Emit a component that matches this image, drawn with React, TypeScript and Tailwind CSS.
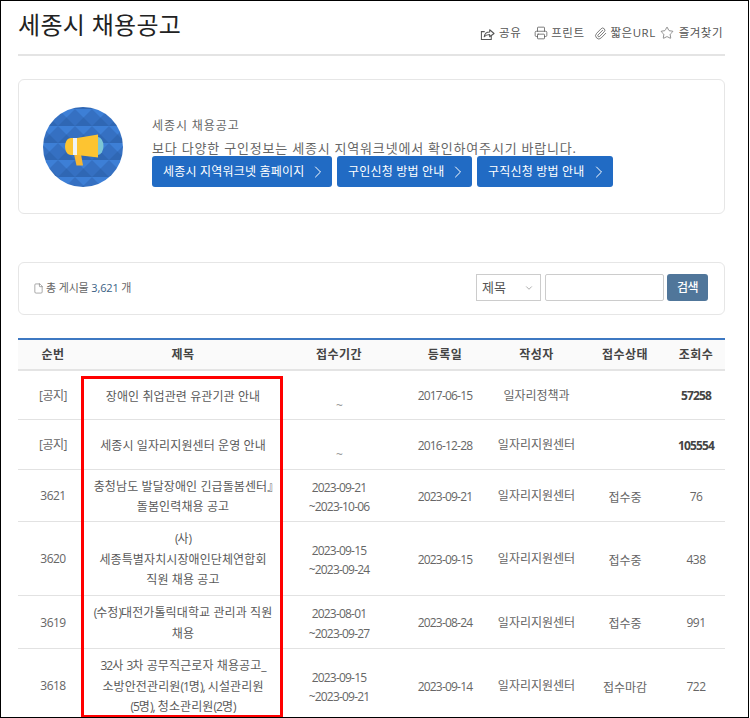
import { ChevronDown, ChevronRight, File, Paperclip, Printer, Star } from 'lucide-react'

const rows = [
  { no: '[공지]', title: ['장애인 취업관련 유관기관 안내'], period: ['~'], date: '2017-06-15', author: '일자리정책과', status: '', views: '57258', bold: true, h: 'h-[49px]' },
  { no: '[공지]', title: ['세종시 일자리지원센터 운영 안내'], period: ['~'], date: '2016-12-28', author: '일자리지원센터', status: '', views: '105554', bold: true, h: 'h-[50px]' },
  { no: '3621', title: ['충청남도 발달장애인 긴급돌봄센터』', '돌봄인력채용 공고'], period: ['2023-09-21', '~2023-10-06'], date: '2023-09-21', author: '일자리지원센터', status: '접수중', views: '76', bold: false, h: 'h-[52px]' },
  { no: '3620', title: ['(사)', '세종특별자치시장애인단체연합회', '직원 채용 공고'], period: ['2023-09-15', '~2023-09-24'], date: '2023-09-15', author: '일자리지원센터', status: '접수중', views: '438', bold: false, h: 'h-[74px]' },
  { no: '3619', title: ['(수정)대전가톨릭대학교 관리과 직원', '채용'], period: ['2023-08-01', '~2023-09-27'], date: '2023-08-24', author: '일자리지원센터', status: '접수중', views: '991', bold: false, h: 'h-[53px]' },
  { no: '3618', title: ['32사 3차 공무직근로자 채용공고_', '소방안전관리원(1명), 시설관리원', '(5명), 청소관리원(2명)'], period: ['2023-09-15', '~2023-09-21'], date: '2023-09-14', author: '일자리지원센터', status: '접수마감', views: '722', bold: false, h: 'h-[74px]' },
]

const ShareIcon = () => (
  <svg viewBox="0 0 16 16" fill="none" stroke="currentColor" strokeWidth="1.1" className="size-[15px]">
    <path d="M5 6H1.500v8.500h10.500V10" />
    <path d="M4.500 11.500c.4-3 2.600-5 5.800-5V4l4.700 4-4.700 3.500V9c-2.400 0-4.300.6-5.800 2.500z" strokeLinejoin="round" />
  </svg>
)

// 둥근 파란 바탕에 확성기
const Megaphone = () => (
  <svg viewBox="0 0 80 80" className="h-20 w-20 shrink-0">
    <defs>
      <pattern id="tri" width="17" height="17" patternUnits="userSpaceOnUse" x="-2" y="2">
        <rect width="17" height="17" fill="#3570c2" />
        <path d="M0 0h17L8.500 8.500z" fill="#3d7fd6" />
        <path d="M0 17h17L8.500 8.500z" fill="#2f67b4" />
      </pattern>
    </defs>
    <circle cx="40" cy="40" r="40" fill="url(#tri)" />
    <ellipse cx="55" cy="39" rx="5.500" ry="9" fill="#7cc6d6" />
    <path d="M31 47h7l2 11.500h-6.500z" fill="#f7b733" />
    <path d="M30 31h-2c-8 0-8 17 0 17h2z" fill="#fdc431" />
    <path d="M34 31L55 27.500V50.500L34 48z" fill="#fdc431" />
    <rect x="30" y="31" width="4" height="17" fill="#eef2f5" />
  </svg>
)

const LinkButton = ({ label, className }: { label: string; className: string }) => (
  <a className={`flex h-[31px] items-center justify-between whitespace-nowrap rounded-[3px] bg-[#216bc4] pl-[11px] pr-[4px] text-[12px] tracking-[0.2px] text-white ${className}`}>
    {label}
    <ChevronRight className="size-[20px]" strokeWidth={1.2} />
  </a>
)

// 숫자와 기호는 한글보다 좁게
const TitleLine = ({ text }: { text: string }) => (
  <div className="whitespace-nowrap">
    {text.split(/([0-9()_,]+|』)/).map((part, i) =>
      i % 2 ? <span key={i} className={part === '』' ? 'tracking-[-7px]' : 'tracking-[-1px]'}>{part}</span> : part,
    )}
  </div>
)

export default function App() {
  return (
    <div className="relative h-[718px] w-[749px] overflow-hidden border border-black bg-white font-['Open_Sans','Noto_Sans_CJK_KR',sans-serif] text-[#666]">
      <div className="ml-[17px] w-[707px]">
        <header className="flex h-[55px] items-start justify-between border-b-2 border-[#e4e4e4]">
          <h1 className="mt-[5px] text-[24px] leading-[38px] tracking-[0.3px] text-[#222]">세종시 채용공고</h1>
          <div className="mr-[2px] mt-[22px] flex items-center text-[11.500px] leading-5 tracking-[0.5px] text-[#555]">
            <span className="flex items-center gap-[4px]"><ShareIcon />공유</span>
            <span className="ml-[13px] flex items-center gap-[3px]"><Printer className="size-[14px]" strokeWidth={1.3} />프린트</span>
            <span className="ml-[9px] flex items-center gap-[4px]"><Paperclip className="size-[13px]" strokeWidth={1.4} />짧은URL</span>
            <span className="ml-[4px] flex items-center gap-[5px]"><Star className="size-[14px]" strokeWidth={1.1} />즐겨찾기</span>
          </div>
        </header>

        <section className="mt-[23px] flex h-[135px] items-center rounded-md border border-[#e6e6e6] pl-[24px]">
          <Megaphone />
          <div className="ml-[29px] mt-[9px]">
            <p className="mt-[1px] text-[12px] leading-[20px] tracking-[0.9px]">세종시 채용공고</p>
            <p className="mt-[4px] h-[17px] whitespace-nowrap text-[13px] leading-[17px] tracking-[0.8px]">보다 다양한 구인정보는 세종시 지역워크넷에서 확인하여주시기 바랍니다.</p>
            <div className="mt-[-1px] flex gap-[5px]">
              <LinkButton label="세종시 지역워크넷 홈페이지" className="w-[180px]" />
              <LinkButton label="구인신청 방법 안내" className="w-[135px]" />
              <LinkButton label="구직신청 방법 안내" className="w-[136px]" />
            </div>
          </div>
        </section>

        <section className="mt-[48px] flex h-[53px] items-start justify-between rounded-md border border-[#e6e6e6] pl-[14px] pr-[16px]">
          <p className="mt-[17px] flex items-center text-[11px] leading-4 tracking-[-0.15px]">
            <File className="mr-[2px] size-[11px]" strokeWidth={1.2} />총 게시물&nbsp;<span className="text-[#3b5f85]">3,621</span>&nbsp;개
          </p>
          <div className="mt-[11px] flex">
            <div className="relative">
              <select className="h-[27px] w-[65px] appearance-none border border-[#ccc] bg-white pl-[5px] text-[13px] text-[#555]">
                <option>제목</option>
              </select>
              <ChevronDown className="pointer-events-none absolute right-[7px] top-[9px] size-[10px]" strokeWidth={1.3} />
            </div>
            <input className="ml-[4px] h-[27px] w-[119px] rounded-[2px] border border-[#ccc] bg-white" />
            <button className="ml-[3px] h-[27px] w-[41px] rounded-[3px] bg-[#50769a] text-[12px] font-medium tracking-[-0.5px] text-white">검색</button>
          </div>
        </section>

        <table className="mt-[23px] w-[707px] table-fixed border-collapse border-t-2 border-[#3d78c2] text-center text-[12px] leading-[20px]">
          <colgroup>
            <col className="w-[70px]" />
            <col className="w-[190px]" />
            <col className="w-[122px]" />
            <col className="w-[90px]" />
            <col className="w-[93px]" />
            <col className="w-[84px]" />
            <col className="w-[58px]" />
          </colgroup>
          <thead>
            <tr className="h-[31px] border-b-2 border-[#e4e4e4] bg-[#fafafa] text-[12px] font-semibold tracking-[0.5px] text-[#444]">
              <th className="font-semibold">순번</th>
              <th className="font-semibold">제목</th>
              <th className="font-semibold">접수기간</th>
              <th className="font-semibold">등록일</th>
              <th className="font-semibold">작성자</th>
              <th className="font-semibold">접수상태</th>
              <th className="font-semibold">조회수</th>
            </tr>
          </thead>
          <tbody>
            {rows.map((r) => (
              <tr key={r.title[0]} className={`${r.h} border-b border-[#e2e2e2]`}>
                <td className="pt-[2px] tracking-[-0.5px]">{r.no}</td>
                <td className="pt-[4px] leading-[20.500px] tracking-[0.1px] text-[#5a5a5a]">
                  {r.title.map((t) => <TitleLine key={t} text={t} />)}
                </td>
                <td className="pt-[4px] leading-[19.500px] tracking-[-0.8px]">
                  {r.period.map((t) => <div key={t} className={r.period.length === 1 ? 'pt-[18px] text-[#999]' : ''}>{t}</div>)}
                </td>
                <td className="pt-[3px] tracking-[-0.8px]">{r.date}</td>
                <td className="pt-[2px]">{r.author}</td>
                <td className="pt-[5px]">{r.status}</td>
                <td className={`pt-[3px] ${r.bold ? 'font-bold tracking-[-0.9px] text-[#444]' : 'tracking-[-0.5px]'}`}>{r.views}</td>
              </tr>
            ))}
          </tbody>
        </table>
      </div>

      {/* 강조용 빨간 박스 */}
      <div className="pointer-events-none absolute left-[80px] top-[375px] h-[342px] w-[202px] border-[3px] border-[#ff0000]" />
    </div>
  )
}
